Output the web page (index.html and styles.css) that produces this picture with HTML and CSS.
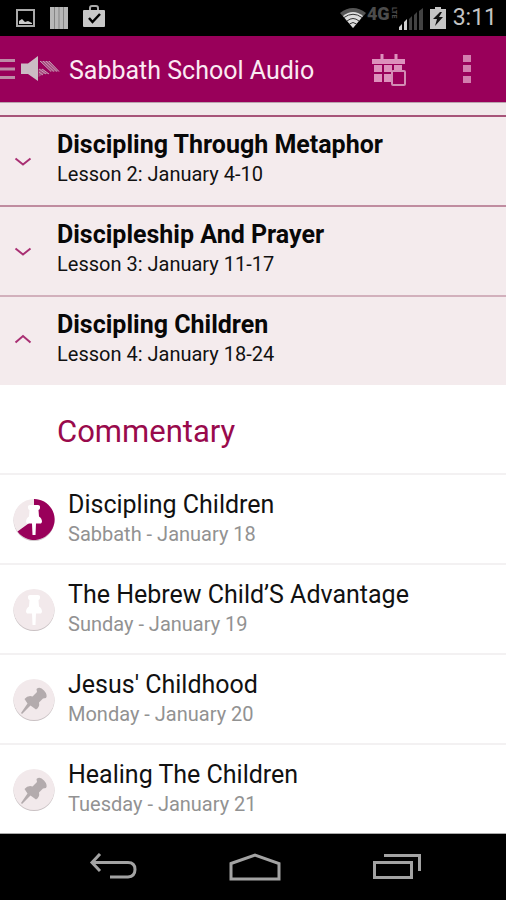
FILE: index.html
```html
<!DOCTYPE html>
<html lang="en">
<head>
<meta charset="utf-8">
<meta name="viewport" content="width=device-width, initial-scale=1">
<title>Sabbath School Audio</title>
<link rel="stylesheet" href="styles.css">
</head>
<body>
<svg class="defs" aria-hidden="true">
  <symbol id="down" viewBox="0 0 18 10"><path d="M1.5 1.5 9 7.5 16.5 1.5" fill="none" stroke="currentColor" stroke-width="2"/></symbol>
  <symbol id="up" viewBox="0 0 18 10"><path d="M1.5 8.5 9 2 16.5 8.5" fill="none" stroke="currentColor" stroke-width="2"/></symbol>
  <symbol id="pin" viewBox="0 0 42 42"><path d="M15 7.500Q15 6 17 6H25Q27 6 27 7.500V9Q27 10.500 25.500 11L26 17.500Q29 19 29 23L28 24.500H23L22.500 36H19.500L19 24.500H14L13 23Q13 19 16 17.500L16.500 11Q15 10.500 15 9Z"/></symbol>
  <symbol id="tilted" viewBox="0 0 42 42"><path d="M23.500 10Q27 7 31 11.500T33 19L30 19.500 26 23.500Q27 28 23 30.500L17.500 26.500 9 35 8 34 14.500 24.500 11.500 20Q15 16 19.500 17.500L24 13Z"/></symbol>
</svg>
<div class="screen">
  <div class="status">
    <svg width="20" height="20" viewBox="0 0 20 20" aria-hidden="true"><rect x="1" y="2" width="17" height="16" fill="none" stroke="#aaa" stroke-width="2"/><path d="M3 16v-3l3-2 3 3 3-1 4 2v1z" fill="#ccc"/></svg>
    <svg class="bars" width="18" height="22" viewBox="0 0 18 22" aria-hidden="true"><path d="M0 0h18v22H0z" fill="#b8b8b8"/><path d="M4.500 0v22M9 0v22M13.500 0v22" stroke="#858585"/></svg>
    <svg class="bag" width="24" height="22" viewBox="0 0 24 22" aria-hidden="true"><path d="M8 6V3q0-2 2-2h4q2 0 2 2v3" fill="none" stroke="#aaa" stroke-width="2"/><rect x="1" y="5" width="22" height="17" rx="1" fill="#c8c8c8"/><path d="M7 13l3.500 4L18 9" fill="none" stroke="#000" stroke-width="2.500"/></svg>
    <span class="grow"></span>
    <svg class="wifi" width="28" height="22" viewBox="0 0 28 22" aria-hidden="true"><path d="M1 6Q14-4 27 6L14 21z" fill="#555"/><path d="M4 9Q14 1 24 9L14 21z" fill="#ddd"/><path d="M5 10.500Q14 4 23 10.500M8 14Q14 9 20 14M10.500 17Q14 14 17.500 17" fill="none" stroke="#333" stroke-width="1"/></svg>
    <span class="net">4G<small>LTE</small></span>
    <svg class="signal" width="26" height="23" viewBox="0 0 26 23" aria-hidden="true"><path d="M1 22v-3l3-3v6zM6 22v-8l3-3v11z" fill="#d0d0d0"/><path d="M11 22V11l3-3v14zM16 22V7l3-3v18zM21 22V3l4-3v22z" fill="#424242"/></svg>
    <svg class="battery" width="16" height="22" viewBox="0 0 16 22" aria-hidden="true"><path d="M5 0h6v2h5v20H0V2h5z" fill="#c5c5c5"/><path d="M10 5 3 12h4l-2 7 8-9H9l3-5z" fill="#111"/></svg>
    <time>3:11</time>
  </div>
  <header class="appbar">
    <button class="home" aria-label="Open menu">
      <svg width="60" height="28" viewBox="0 0 60 28"><path d="M0 5.500h15M0 14h15M0 22.500h15" stroke="#bd8ca6" stroke-width="3"/><path d="M21 8.500h7L38 1v25l-10-7h-7z" fill="#cbbcc4"/><path d="M40 6h9l10 10.500h-8zM38.500 14q5-1 8 3l3 2h-6l-5 3z" fill="#a8487f"/><path d="M40 6l11 10.500M43 6l11 10.500M46 6l11 10.500M49 6l10 10.500M39 14l7 5M42 14l7 5M39 17l4 3" fill="none" stroke="#c79bb3" stroke-width="1"/></svg>
    </button>
    <h1>Sabbath School Audio</h1>
    <button class="calendar" aria-label="Today">
      <svg width="36" height="34" viewBox="0 0 36 34"><path d="M1 6h33v5H1zM9.500 1h3v6h-3zM23.500 1h3v6h-3z" fill="#dd91bc"/><path d="M3 12h8v7H3zM13 12h8v7h-8zM23 12h8v7h-8zM3 21h8v8H3zM13 21h8v8h-8z" fill="#dd91bc"/><rect x="21" y="18" width="13" height="14" rx="1" fill="#99005a" stroke="#d28db4" stroke-width="2"/></svg>
    </button>
    <button class="more" aria-label="More options">
      <svg width="10" height="30" viewBox="0 0 10 30"><path d="M1 1h8v7H1zM1 11h8v7H1zM1 22h8v7H1z" fill="#d27eae"/></svg>
    </button>
  </header>
  <main>
    <button class="lesson" aria-expanded="false"><svg class="chev"><use href="#down"/></svg><span><b>Discipling Through Metaphor</b><span class="sub">Lesson 2: January 4-10</span></span></button>
    <button class="lesson soft" aria-expanded="false"><svg class="chev"><use href="#down"/></svg><span><b>Discipleship And Prayer</b><span class="sub">Lesson 3: January 11-17</span></span></button>
    <button class="lesson softer" aria-expanded="true"><svg class="chev open"><use href="#up"/></svg><span><b>Discipling Children</b><span class="sub">Lesson 4: January 18-24</span></span></button>
    <h2>Commentary</h2>
    <ul>
      <li><a href="#d18"><svg class="disc" viewBox="0 0 42 42"><circle cx="21" cy="21.500" r="20.500" fill="#cfc6ca"/><circle cx="21" cy="20.500" r="20.500" fill="#f2e9eb"/><path d="M21 20.500V0A20.500 20.500 0 1 1 4.500 32.500Z" fill="#99005a"/><use href="#pin" fill="#fff"/></svg><span><span class="name">Discipling Children</span><span class="sub">Sabbath - January 18</span></span></a></li>
      <li><a href="#d19"><svg class="disc" viewBox="0 0 42 42"><circle cx="21" cy="21.500" r="20.500" fill="#c9c1c3"/><circle cx="21" cy="20.500" r="20.500" fill="#f2e9eb"/><use href="#pin" fill="#fff"/></svg><span><span class="name">The Hebrew Child’S Advantage</span><span class="sub">Sunday - January 19</span></span></a></li>
      <li><a href="#d20"><svg class="disc" viewBox="0 0 42 42"><circle cx="21" cy="21.500" r="20.500" fill="#c9c1c3"/><circle cx="21" cy="20.500" r="20.500" fill="#f2e9eb"/><use href="#tilted" fill="#b3abad"/></svg><span><span class="name">Jesus' Childhood</span><span class="sub">Monday - January 20</span></span></a></li>
      <li><a href="#d21"><svg class="disc" viewBox="0 0 42 42"><circle cx="21" cy="21.500" r="20.500" fill="#c9c1c3"/><circle cx="21" cy="20.500" r="20.500" fill="#f2e9eb"/><use href="#tilted" fill="#b3abad"/></svg><span><span class="name">Healing The Children</span><span class="sub">Tuesday - January 21</span></span></a></li>
    </ul>
  </main>
  <nav class="system" aria-label="System">
    <button aria-label="Back"><svg width="48" height="28" viewBox="0 0 48 28"><path d="M11 1 3 9.500 11 18M3 9.500H39Q46 9.500 46 16.500T39 24H21" fill="none" stroke="#a3a3a3" stroke-width="3"/></svg></button>
    <button aria-label="Home"><svg width="54" height="30" viewBox="0 0 54 30"><path d="M3 11.500 27 3 51 11.500V27H3Z" fill="none" stroke="#a3a3a3" stroke-width="3"/></svg></button>
    <button aria-label="Recent apps"><svg width="50" height="28" viewBox="0 0 50 28"><path d="M2.500 9.500h37v15h-37zM12 2.500H47.500V18" fill="none" stroke="#a3a3a3" stroke-width="3"/></svg></button>
  </nav>
</div>
</body>
</html>
```

FILE: styles.css
```css
* { box-sizing: border-box; }

body {
  margin: 0;
  background: #fff;
  color: #111;
  font-family: Roboto, sans-serif;
}

button {
  margin: 0;
  padding: 0;
  border: 0;
  background: none;
  color: inherit;
  font: inherit;
  text-align: left;
}

svg { display: block; flex: none; }

.defs { position: absolute; width: 0; height: 0; }

.screen {
  display: flex;
  flex-direction: column;
  min-height: 100vh;
}

.status {
  display: flex;
  align-items: center;
  height: 36px;
  padding: 0 9px 0 16px;
  background: #000;
}

.bars { margin-left: 14px; }
.bag { margin: 0 0 4px 14px; }
.grow { flex: 1; }

.net {
  display: flex;
  align-items: center;
  height: 24px;
  margin-bottom: 10px;
  color: #4c4c4c;
  font-size: 18px;
  font-weight: 900;
}

.net small {
  font-size: 7px;
  line-height: 8px;
  writing-mode: vertical-rl;
}

.signal { margin-top: 2px; }
.battery { margin-left: 6px; }

.status time {
  margin-left: 7px;
  color: #c4c4c4;
  font-size: 23px;
  line-height: 38px;
}

.appbar {
  display: flex;
  align-items: center;
  height: 67px;
  padding-right: 34px;
  border-bottom: 1px solid #b9a5ae;
  background: #99005a;
}

.appbar h1 {
  flex: 1;
  margin: 4px 0 0 9px;
  color: #fbeaf3;
  font-size: 25px;
  font-weight: 400;
  line-height: 32px;
}

.calendar { margin-top: 2px; }
.more { margin-left: 55px; }

main {
  flex: 1;
  padding-top: 12px;
  background: linear-gradient(#f1e8ea 12px, #fff 12px);
}

.lesson {
  display: flex;
  align-items: flex-start;
  width: 100%;
  height: 90px;
  padding-top: 11px;
  border-top: 2px solid #a75479;
  background: #f4ebed;
}

.soft { border-top-color: #c08ca0; }
.softer { border-top-color: #d2b0bc; }

.chev {
  width: 18px;
  height: 10px;
  margin: 29px 25px 0 14px;
  color: #a92f73;
}

.chev.open { margin-top: 26px; }

.lesson b,
.name {
  display: block;
  font-size: 25px;
  line-height: 34px;
}

.lesson b { color: #080808; }

.sub {
  display: block;
  font-size: 20px;
  line-height: 24px;
}

h2 {
  height: 88px;
  margin: 0;
  padding: 27px 57px 0;
  color: #990a4c;
  font-size: 31px;
  font-weight: 400;
  line-height: 40px;
}

ul {
  margin: 0;
  padding: 0;
  list-style: none;
}

li { border-top: 2px solid #f3f1f2; }

li a {
  display: flex;
  align-items: flex-start;
  height: 88px;
  padding: 13px 13px 0;
  color: inherit;
  text-decoration: none;
}

.disc {
  width: 42px;
  height: 42px;
  margin: 11px 13px 0 0;
}

li .sub { color: #929292; }

.system {
  display: flex;
  align-items: center;
  justify-content: space-between;
  height: 67px;
  padding: 0 84px 0 89px;
  border-top: 1px solid #aaa;
  background: #000;
}
```
